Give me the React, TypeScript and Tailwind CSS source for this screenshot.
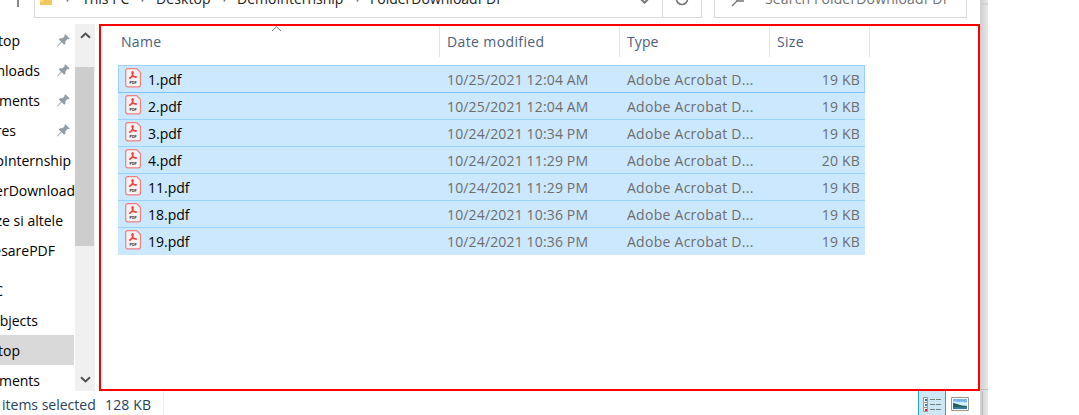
const files = [
  ["1.pdf", "10/25/2021 12:04 AM", "19 KB"],
  ["2.pdf", "10/25/2021 12:04 AM", "19 KB"],
  ["3.pdf", "10/24/2021 10:34 PM", "19 KB"],
  ["4.pdf", "10/24/2021 11:29 PM", "20 KB"],
  ["11.pdf", "10/24/2021 11:29 PM", "19 KB"],
  ["18.pdf", "10/24/2021 10:36 PM", "19 KB"],
  ["19.pdf", "10/24/2021 10:36 PM", "19 KB"],
];

const places = [
  { label: "Desktop", width: "w-[20px]", pinned: true },
  { label: "Downloads", width: "w-[40px]", pinned: true },
  { label: "Documents", width: "w-[40px]", pinned: true },
  { label: "Pictures", width: "w-[16px]", pinned: true },
  { label: "DemoInternship", width: "w-[71px]", pinned: false },
  { label: "FolderDownload", width: "w-[75px]", pinned: false },
  { label: "Poze si altele", width: "w-[63px]", pinned: false },
  { label: "ProcesarePDF", width: "w-[55px]", pinned: false },
];

function PdfIcon() {
  return (
    <svg width="17" height="20" viewBox="0 0 17 20" className="shrink-0">
      <path d="M2.700 .7h9l3.800 3.800v12.300a2 2 0 0 1-2 2H2.700a2 2 0 0 1-2-2V2.700a2 2 0 0 1 2-2Z" fill="#f7f2f4" stroke="#ee8080" strokeWidth="1.200" />
      <path d="M7.500 3.600c1.100 0 .6 2.200 0 3.500-.700 1.500-1.600 3-2.500 3.200-1 .1-.3-1 1.300-1.500 1.700-.5 3.600-.6 4.700-.2.900.5-.1 1.200-1.300.4C8.300 8 6.900 6.100 6.900 4.700c0-.6.200-1.100.6-1.100Z" fill="none" stroke="#f0433f" strokeWidth="1.300" />
      <text x="8.100" y="15.900" textAnchor="middle" fontSize="3.600" fontWeight="700" fontFamily="Liberation Sans, sans-serif" fill="#222">PDF</text>
    </svg>
  );
}

function Pin() {
  return (
    <svg width="13" height="13" viewBox="0 0 13 13" className="shrink-0">
      <path d="M8.300.2 12.800 4.500 11.700 5.200 10.500 5.100 8.400 7.300 8.500 9.400 7.200 10.700 4.700 8.300.600 12.500 0 12 4 7.700 1.800 5.500 3 4.300 5.500 4.300 7.600 2.200 7.500.9Z" fill="#929da5" />
    </svg>
  );
}

function Chevron({ className }: { className: string }) {
  return (
    <svg width="11" height="7" viewBox="0 0 11 7" className={className}>
      <path d="m1 5.700 4.500-4.200L10 5.700" fill="none" stroke="currentColor" strokeWidth="2" />
    </svg>
  );
}

function Crumb() {
  return (
    <svg width="5" height="9" viewBox="0 0 5 9" className="-mt-[3px] shrink-0">
      <path d="m.700.500 3.500 4-3.500 4" fill="none" stroke="#777" strokeWidth="1.300" />
    </svg>
  );
}

function TopBar() {
  return (
    <header className="flex h-6 items-start overflow-hidden whitespace-nowrap text-[#222]">
      <div className="ml-[17px] h-[7px] w-[2px] bg-[#888]" />
      <div className="ml-[15px] flex h-[18px] w-[668px] border border-t-0 border-[#d9d9d9]">
        <div className="-mt-[11px] flex h-5 w-[627px] items-center leading-5">
          <svg width="13" height="18" viewBox="0 0 13 18" className="ml-[5px] mt-[-5px] shrink-0">
            <path d="M0 1h9l2 2h1v14H0Z" fill="#ffdc7f" />
            <path d="M5 8h7v9H0v-3h3Z" fill="#f3c760" />
          </svg>
          <div className="ml-[13px] flex items-center">
            <Crumb />
            <span className="ml-[11px] w-[59px]">This PC</span>
            <Crumb />
            <span className="ml-[10px] w-[67px] tracking-[0.100px]">Desktop</span>
            <Crumb />
            <span className="ml-[9px] w-[119px]">DemoInternship</span>
            <Crumb />
            <span className="ml-[9px]">FolderDownloadPDF</span>
          </div>
        </div>
        <div className="flex h-[17px] w-[39px] justify-center border-l border-[#d9d9d9]">
          <svg width="16" height="6" viewBox="0 0 16 6">
            <path d="M2.500-1a5.500 5.500 0 0 0 11 0" fill="none" stroke="#777" strokeWidth="1.700" />
          </svg>
        </div>
      </div>
      <div className="relative">
        <svg width="9" height="4" viewBox="0 0 9 4" className="absolute -left-[62px] top-0">
          <path d="m1-.800 3.500 3.500L8-.800" fill="none" stroke="#777" strokeWidth="2" />
        </svg>
      </div>
      <div className="ml-3 flex h-[18px] w-[253px] border border-t-0 border-[#d9d9d9]">
        <svg width="15" height="7" viewBox="0 0 15 7" className="ml-4">
          <path d="M1 6 7 0M5 1h8" fill="none" stroke="#777" strokeWidth="1.300" />
        </svg>
        <span className="-mt-[11px] ml-[19px] leading-5 tracking-[0.150px] text-[#707070]">Search FolderDownloadPDF</span>
      </div>
    </header>
  );
}

function Sidebar() {
  return (
    <nav className="w-[75px] shrink-0 overflow-hidden pt-[1px] text-black">
      {places.map((place) => (
        <div key={place.label} className="flex h-[30px] items-center">
          <div className={`flex shrink-0 justify-end overflow-hidden whitespace-nowrap pt-[2px] ${place.width}`}>
            <span>{place.label}</span>
          </div>
          {place.pinned && <div className="ml-auto mr-[5px]"><Pin /></div>}
        </div>
      ))}
      <div className="mt-[10px] flex h-[30px] w-[3px] items-center justify-end overflow-hidden whitespace-nowrap pt-[2px]"><span>This PC</span></div>
      <div className="flex h-[30px] w-[38px] items-center justify-end overflow-hidden whitespace-nowrap pt-[2px]"><span>3D Objects</span></div>
      <div className="flex h-[30px] w-[74px] items-center bg-[#d9d9d9] pt-[2px]">
        <div className="flex w-[20px] justify-end overflow-hidden"><span>Desktop</span></div>
      </div>
      <div className="flex h-[30px] w-[40px] items-center justify-end overflow-hidden whitespace-nowrap pt-[2px]"><span>Documents</span></div>
    </nav>
  );
}

function FileList() {
  return (
    <main className="ml-1 w-[881px] shrink-0 border-2 border-[#f00] pl-[17px]">
      <div className="relative flex h-[31px] items-center text-[#4c607a]">
        <div className="flex h-full w-[322px] items-center border-r border-[#e5e5e5] pl-[3px] tracking-[0.300px]">Name</div>
        <div className="flex h-full w-[180px] items-center border-r border-[#e5e5e5] pl-[7px] tracking-[0.380px]">Date modified</div>
        <div className="flex h-full w-[150px] items-center border-r border-[#e5e5e5] pl-[7px] tracking-[0.100px]">Type</div>
        <div className="flex h-full w-[100px] items-center border-r border-[#e5e5e5] pl-[7px] tracking-[0.300px]">Size</div>
        <svg width="11" height="6" viewBox="0 0 11 6" className="absolute left-[153px] top-0">
          <path d="m1 5 4.500-4.300L10 5" fill="none" stroke="#777" />
        </svg>
      </div>
      <div className="mt-2 w-[747px]">
        {files.map(([name, date, size], i) => (
          <div
            key={name}
            className={`flex items-center border-b bg-[#cce8ff] text-[#6d6d6d] ${i === 0 ? "h-[28px] border border-[#99d1ff] border-b-[#7cc3ff]" : "h-[27px] border-[#99d1ff] px-px last:border-[#cce8ff]"}`}
          >
            <div className="flex w-[328px] items-center pl-[6px]">
              <div className="-mt-[2px]"><PdfIcon /></div>
              <span className="ml-[6px] pt-px text-black">{name}</span>
            </div>
            <div className="w-[180px] pt-px tracking-[0.150px]">{date}</div>
            <div className="w-[150px] pt-px tracking-[0.270px]">Adobe Acrobat D...</div>
            <div className="w-[83px] pt-px text-right tracking-[0.200px]">{size}</div>
          </div>
        ))}
      </div>
    </main>
  );
}

function StatusBar() {
  return (
    <footer className="flex h-6 overflow-hidden text-[#253f5d]">
      <div className="flex h-[28px] w-[164px] items-center whitespace-nowrap border-r border-[#eee]">
        <span className="ml-[2px] w-[103px]">items selected</span>
        <span className="tracking-[0.150px]">128 KB</span>
      </div>
      <div className="ml-[754px] flex h-6 w-[28px] justify-center border-x border-[#26a0da] bg-[#cce8f6]">
        <svg width="20" height="18" viewBox="0 0 20 18" className="mt-[5px]">
          <path d="M1.500 1.500h4v5h-4ZM1.500 6.500h4v5h-4ZM1.500 11.500h4v4h-4Z" fill="#fff" stroke="#999" />
          <path d="M3 3h2v2H3Z" fill="#37768b" />
          <path d="M3 8h2v2H3Z" fill="#4974aa" />
          <path d="M3 13h2v2H3Z" fill="#c22" />
          <path d="M8 3.500h5M14 3.500h5M8 8.500h5M14 8.500h5M8 13.500h5M14 13.500h5" stroke="#75807a" />
        </svg>
      </div>
      <svg width="18" height="14" viewBox="0 0 18 14" className="ml-[5px] mt-[6px]">
        <path d="M.500.500h17v13H.500Z" fill="#fff" stroke="#999" />
        <path d="M2 2h14v10H2Z" fill="#79b4ef" />
        <path d="M2 5c3-2 5 1 7 0s4 1 7 0v4H2Z" fill="#d5efff" />
        <path d="M2 6c4 0 6 3 14 3v1H2Z" fill="#28634f" />
        <path d="M2 10h14v2H2Z" fill="#3979aa" />
      </svg>
    </footer>
  );
}

export default function App() {
  return (
    <div className="flex h-[415px] w-[1079px] overflow-hidden bg-white font-['Open_Sans',sans-serif] text-[14px] leading-[20px]">
      <div className="flex w-[980px] shrink-0 flex-col">
        <TopBar />
        <div className="flex h-[367px] overflow-hidden">
          <Sidebar />
          <div className="flex w-5 shrink-0 flex-col items-center bg-[#f0f0f0] text-[#505050]">
            <Chevron className="mt-2" />
            <div className="mt-[28px] h-[179px] w-full border-r border-[#f0f0f0] bg-[#cdcdcd]" />
            <Chevron className="mb-[8px] mt-auto rotate-180" />
          </div>
          <FileList />
        </div>
        <StatusBar />
      </div>
      <div className="flex w-2 flex-col bg-linear-to-r from-[#cecece] to-[#e8e8e8]">
        <div className="mt-[3px] h-[2px] bg-[#d0d0d0]" />
        <div className="mt-[384px] h-px bg-[#c0c0c0]" />
        <div className="ml-[2px] mt-px h-6 w-px bg-[#b8b8b8]" />
      </div>
    </div>
  );
}
